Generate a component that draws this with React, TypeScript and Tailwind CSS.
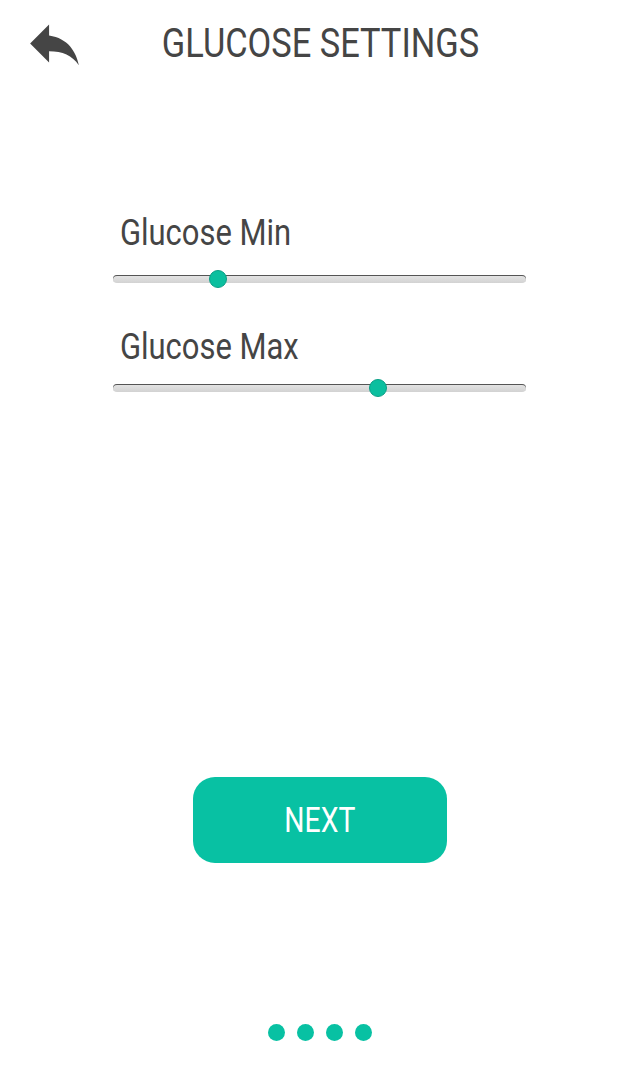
const sliders = [
  { label: "Glucose Min", value: 25.4 },
  { label: "Glucose Max", value: 64.2 },
]

function Slider({ value }: { value: number }) {
  return (
    <div className="relative h-[20px] flex items-center">
      <div className="w-full h-[8px] rounded-full bg-gradient-to-b from-[#e6e6e6] to-[#d2d2d2] shadow-[inset_0_1px_0_#555]"></div>
      <span
        className="absolute top-1/2 w-[18px] h-[18px] -translate-x-1/2 -translate-y-1/2 rounded-full bg-[#0bbf9f] border border-[#0a9f86]"
        style={{ left: `${value}%` }}
      />
    </div>
  )
}

export default function App() {
  return (
    <div className="w-[640px] h-[1089px] bg-white flex flex-col font-['Roboto',sans-serif] text-[#454545]">
      <div className="grid grid-cols-[1fr_auto_1fr] items-start pt-[24px]">
        <button className="ml-[22px] -mt-[13px] w-[65px] h-[65px] text-[#454545]">
          <svg viewBox="0 0 24 24" className="w-[65px] h-[65px]" fill="currentColor">
            <path d="M10 9V5l-7 7 7 7v-4.1c5 0 8.5 1.6 11 5.1-1-5-4-10-11-11z" />
          </svg>
        </button>
        <h1 className="text-[40px] leading-[40px] scale-x-[0.86] whitespace-nowrap">GLUCOSE SETTINGS</h1>
        <div></div>
      </div>

      <div className="mx-[113px] w-[413px] mt-[139px] flex flex-col">
        {sliders.map((s, i) => (
          <div key={s.label} className={i === 0 ? "flex flex-col" : "flex flex-col mt-[40px]"}>
            <span className="pl-[8px] text-[36px] leading-[36px] scale-x-[0.86] origin-left whitespace-nowrap">{s.label}</span>
            <div className={i === 0 ? "mt-[18px]" : "mt-[13px]"}>
              <Slider value={s.value} />
            </div>
          </div>
        ))}
      </div>

      <button className="mx-auto mt-[379px] w-[254px] h-[86px] rounded-[22px] bg-[#08c1a3] text-white text-[35px] leading-none">
        <span className="inline-block scale-x-[0.81]">NEXT</span>
      </button>

      <div className="mt-[161px] flex justify-center gap-[12px]">
        <span className="w-[17px] h-[17px] rounded-full bg-[#08c1a3]"></span>
        <span className="w-[17px] h-[17px] rounded-full bg-[#08c1a3]"></span>
        <span className="w-[17px] h-[17px] rounded-full bg-[#08c1a3]"></span>
        <span className="w-[17px] h-[17px] rounded-full bg-[#08c1a3]"></span>
      </div>
    </div>
  )
}
